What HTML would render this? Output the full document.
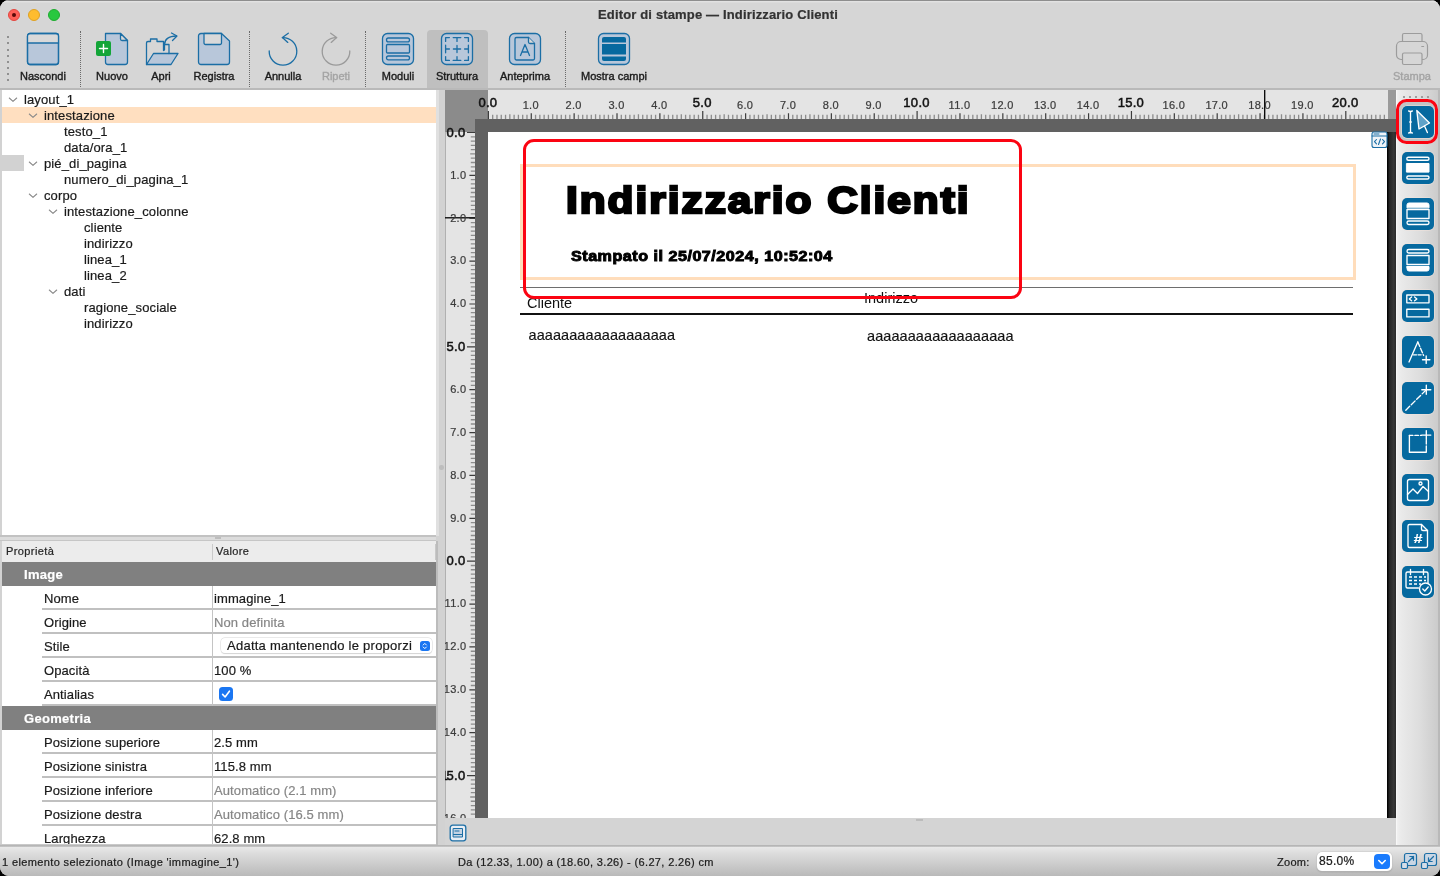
<!DOCTYPE html><html lang="it"><head><meta charset="utf-8"><title>Editor di stampe — Indirizzario Clienti</title><style>
*{box-sizing:border-box;margin:0;padding:0}
html,body{width:1440px;height:876px;overflow:hidden;background:#000;}
body{font-family:"Liberation Sans", "DejaVu Sans", sans-serif;font-size:13px;color:#1e1e1e;position:relative;}
.abs{position:absolute}
#win{will-change:transform;position:absolute;left:0;top:0;width:1440px;height:876px;background:#d6d6d6;border-radius:9px 9px 9px 9px;overflow:hidden;}
.t{position:absolute;white-space:nowrap;line-height:1;-webkit-text-stroke:.22px currentColor;}
.lbl{position:absolute;white-space:nowrap;font-size:11px;line-height:12px;text-align:center;color:#1c1c1c;top:70px;width:80px;margin-left:-40px;letter-spacing:0;-webkit-text-stroke:.38px currentColor;}
.sep{position:absolute;top:31px;width:0;height:56px;border-left:1px dotted #6a6a6a;}
.tree{position:absolute;white-space:nowrap;font-size:13px;line-height:16px;height:16px;color:#1a1a1a;letter-spacing:.12px;-webkit-text-stroke:.2px currentColor;}
.pr{position:absolute;white-space:nowrap;font-size:13px;line-height:16px;color:#1a1a1a;letter-spacing:.1px;-webkit-text-stroke:.2px currentColor;}
.hl{position:absolute;height:1.800px;background:#c0c0c0;}
</style></head><body><div id="win">
<div class="abs" style="left:0;top:0;width:1440px;height:90px;background:#d6d6d6;"></div>
<div class="abs" style="left:0;top:0;width:1440px;height:3px;background:linear-gradient(180deg,#8e8e8e 0,#8e8e8e 0.900px,#e3e3e3 1.300px,#dedede 2.200px,#d6d6d6 3px);"></div>
<div class="abs" style="left:0;top:88px;width:1440px;height:1.600px;background:#b9b9b9;"></div>
<div class="abs" style="left:8px;top:9px;width:12px;height:12px;border-radius:50%;background:#ff5f57;border:0.5px solid #e2463f;"></div>
<div class="abs" style="left:28px;top:9px;width:12px;height:12px;border-radius:50%;background:#febc2e;border:0.5px solid #dea123;"></div>
<div class="abs" style="left:48px;top:9px;width:12px;height:12px;border-radius:50%;background:#28c840;border:0.5px solid #1eab2f;"></div>
<div class="abs" style="left:12px;top:13px;width:4px;height:4px;border-radius:50%;background:#5a0a08;"></div>
<div class="t" style="left:0;width:1436px;text-align:center;top:8px;font-size:13px;font-weight:bold;color:#333;letter-spacing:.15px">Editor di stampe — Indirizzario Clienti</div>
<div class="abs" style="left:7px;top:36px;width:2px;height:2px;background:#909090;"></div>
<div class="abs" style="left:7px;top:42px;width:2px;height:2px;background:#909090;"></div>
<div class="abs" style="left:7px;top:48.5px;width:2px;height:2px;background:#909090;"></div>
<div class="abs" style="left:7px;top:54.5px;width:2px;height:2px;background:#909090;"></div>
<div class="abs" style="left:7px;top:61px;width:2px;height:2px;background:#909090;"></div>
<div class="abs" style="left:7px;top:67px;width:2px;height:2px;background:#909090;"></div>
<div class="abs" style="left:7px;top:73px;width:2px;height:2px;background:#909090;"></div>
<div class="abs" style="left:7px;top:79px;width:2px;height:2px;background:#909090;"></div>
<div class="sep" style="left:80px"></div>
<div class="sep" style="left:249px"></div>
<div class="sep" style="left:365px"></div>
<div class="sep" style="left:565px"></div>
<div class="abs" style="left:427px;top:30px;width:61px;height:58px;background:#bfbfbf;border-radius:4px 4px 0 0;"></div>
<svg class="abs" style="left:26px;top:32px;" width="34" height="34" viewBox="0 0 34 34" fill="none" stroke-linecap="round" stroke-linejoin="round"><rect x="1.5" y="1.5" width="31" height="31" rx="2.5" fill="#b8c7da" stroke="#1b6ea5" stroke-width="1.3"/><path d="M2 2.5h30v8.5h-30z" fill="#d9d9d9" stroke="none"/><rect x="1.5" y="1.5" width="31" height="31" rx="2.5" stroke="#1b6ea5" stroke-width="1.3"/><path d="M1.5 11h31" stroke="#1b6ea5" stroke-width="1.3"/></svg>
<svg class="abs" style="left:95px;top:32px;" width="34" height="34" viewBox="0 0 34 34" fill="none" stroke-linecap="round" stroke-linejoin="round"><path d="M10.5 1.5h15l7 7v21.5a2.5 2.5 0 0 1-2.500 2.500h-17a2.500 2.500 0 0 1-2.500-2.500z" fill="#b8c7da" stroke="#1b6ea5" stroke-width="1.3"/><path d="M25.500 1.500v5.500a1.500 1.500 0 0 0 1.500 1.500h5.500z" fill="#d9d9d9" stroke="#1b6ea5" stroke-width="1.3"/><rect x="1" y="9" width="15" height="15" rx="2" fill="#13a538"/><path d="M8.500 12.500v8M4.500 16.500h8" stroke="#fff" stroke-width="1.400"/></svg>
<svg class="abs" style="left:144px;top:32px;" width="36" height="34" viewBox="0 0 36 34" fill="none" stroke-linecap="round" stroke-linejoin="round"><path d="M2.500 32.500v-21.500a1.500 1.500 0 0 1 1.500-1.500h2.500v-2.500h6.500v2.500h6.500v9" stroke="#1b6ea5" stroke-width="1.3"/><path d="M2.500 32.500l7-11h24.500l-7 11z" fill="#b8c7da" stroke="#1b6ea5" stroke-width="1.3"/><path d="M20.500 18v-5.500c0-5 4-8.500 12-8.500" stroke="#1b6ea5" stroke-width="1.3"/><path d="M27.500 1l5.500 3-4.500 4.500" stroke="#1b6ea5" stroke-width="1.3"/><path d="M20.500 12.500h4.500v9" stroke="#1b6ea5" stroke-width="1.3"/></svg>
<svg class="abs" style="left:197px;top:32px;" width="34" height="34" viewBox="0 0 34 34" fill="none" stroke-linecap="round" stroke-linejoin="round"><path d="M4 1.500h20.500l8 7.500v21a2.500 2.500 0 0 1-2.500 2.500h-26a2.500 2.500 0 0 1-2.500-2.500v-26a2.500 2.500 0 0 1 2.500-2.500z" fill="#b8c7da" stroke="#1b6ea5" stroke-width="1.3"/><path d="M7 1.500h17.500v9.500a1.500 1.500 0 0 1-1.500 1.500h-14.500a1.500 1.500 0 0 1-1.500-1.500z" fill="#d9d9d9" stroke="#1b6ea5" stroke-width="1.3"/></svg>
<svg class="abs" style="left:266px;top:30px;" width="36" height="38" viewBox="0 0 36 38" fill="none" stroke-linecap="round" stroke-linejoin="round"><path d="M16.400 7.600A13.800 13.800 0 1 1 3.200 21" stroke="#1b6ea5" stroke-width="1.3"/><path d="M22.300 3.200l-5.900 4.400 5.400 4.800" stroke="#1b6ea5" stroke-width="1.3"/></svg>
<svg class="abs" style="left:318px;top:30px;" width="36" height="38" viewBox="0 0 36 38" fill="none" stroke-linecap="round" stroke-linejoin="round"><path d="M18.600 7.600A13.800 13.800 0 1 0 31.800 21" stroke="#9a9a9a" stroke-width="1.3"/><path d="M12.700 3.200l5.900 4.400-5.400 4.800" stroke="#9a9a9a" stroke-width="1.3"/></svg>
<svg class="abs" style="left:381px;top:32px;" width="34" height="34" viewBox="0 0 34 34" fill="none" stroke-linecap="round" stroke-linejoin="round"><rect x="1.500" y="1.500" width="31" height="31" rx="5" fill="#b8c7da" stroke="#1b6ea5" stroke-width="1.3"/><rect x="5.500" y="6" width="23" height="3.800" rx="1.900" stroke="#1b6ea5" stroke-width="1.3"/><rect x="5.500" y="12.500" width="23" height="8.500" rx="1" stroke="#1b6ea5" stroke-width="1.3"/><rect x="5.500" y="24" width="23" height="3.800" rx="1.900" stroke="#1b6ea5" stroke-width="1.3"/></svg>
<svg class="abs" style="left:440px;top:32px;" width="34" height="34" viewBox="0 0 34 34" fill="none" stroke-linecap="round" stroke-linejoin="round"><rect x="1.500" y="1.500" width="31" height="31" rx="5" fill="#b8c7da" stroke="#1b6ea5" stroke-width="1.3"/><path d="M5.6 9.399999999999999V5.6h3.800 M13.2 5.6h7.600 M17 5.6v3.800 M24.599999999999998 5.6H28.4v3.800 M5.6 13.2v7.600 M5.6 17h3.800 M28.4 13.2v7.600 M28.4 17h-3.800 M13.4 17h7.200 M17 13.4v7.200 M5.6 24.599999999999998V28.4h3.800 M13.2 28.4h7.600 M17 28.4v-3.800 M24.599999999999998 28.4H28.4v-3.800" stroke="#1b6ea5" stroke-width="1.3"/></svg>
<svg class="abs" style="left:508px;top:32px;" width="34" height="34" viewBox="0 0 34 34" fill="none" stroke-linecap="round" stroke-linejoin="round"><rect x="1.500" y="1.500" width="31" height="31" rx="5" fill="#b8c7da" stroke="#1b6ea5" stroke-width="1.3"/><path d="M8.500 5.500h12l6 6v15a1.500 1.500 0 0 1-1.500 1.500h-16.500a1.500 1.500 0 0 1-1.500-1.500v-19.500a1.500 1.500 0 0 1 1.500-1.500z" stroke="#1b6ea5" stroke-width="1.3"/><path d="M20.500 5.500v4.500a1.500 1.500 0 0 0 1.500 1.500h4.500" fill="#d9d9d9" stroke="#1b6ea5" stroke-width="1.3"/><path d="M12.500 23.500l4.500-11 4.500 11M14 20h6" stroke="#1b6ea5" stroke-width="1.3"/></svg>
<svg class="abs" style="left:597px;top:32px;" width="34" height="34" viewBox="0 0 34 34" fill="none" stroke-linecap="round" stroke-linejoin="round"><rect x="1.500" y="1.500" width="31" height="31" rx="5" fill="#b8c7da" stroke="#1b6ea5" stroke-width="1.3"/><path d="M5 10.600v-3.600a2 2 0 0 1 2-2h20a2 2 0 0 1 2 2v3.600z" fill="#06699f"/><rect x="5" y="12" width="24" height="10.500" fill="#06699f"/><path d="M5 24.400v2.600a2 2 0 0 0 2 2h20a2 2 0 0 0 2-2v-2.600z" fill="#06699f"/></svg>
<svg class="abs" style="left:1395px;top:32px;" width="34" height="34" viewBox="0 0 34 34" fill="none" stroke-linecap="round" stroke-linejoin="round"><path d="M7.500 9.500v-6.500a1.500 1.500 0 0 1 1.500-1.500h16.500a1.500 1.500 0 0 1 1.500 1.500v6.500" stroke="#9c9c9c" stroke-width="1.2"/><rect x="1.500" y="9.500" width="31" height="18" rx="4.500" stroke="#9c9c9c" stroke-width="1.2"/><rect x="7.500" y="21" width="19.500" height="11.500" rx="1.500" fill="#d6d6d6" stroke="#9c9c9c" stroke-width="1.2"/><path d="M26.800 14.500h1.800" stroke="#9c9c9c" stroke-width="1.2"/></svg>
<div class="lbl" style="left:43px;">Nascondi</div>
<div class="lbl" style="left:112px;">Nuovo</div>
<div class="lbl" style="left:161px;">Apri</div>
<div class="lbl" style="left:214px;">Registra</div>
<div class="lbl" style="left:283px;">Annulla</div>
<div class="lbl" style="left:336px;color:#a4a4a4;">Ripeti</div>
<div class="lbl" style="left:398px;">Moduli</div>
<div class="lbl" style="left:457px;">Struttura</div>
<div class="lbl" style="left:525px;">Anteprima</div>
<div class="lbl" style="left:614px;">Mostra campi</div>
<div class="lbl" style="left:1412px;color:#a4a4a4;">Stampa</div>
<div class="abs" style="left:0;top:89.600px;width:445px;height:757px;background:#d2d2d2;"></div>
<div class="abs" style="left:436px;top:89.600px;width:2.500px;height:446px;background:#e0e0e0;"></div>
<div class="abs" style="left:436px;top:541px;width:1.600px;height:305px;background:#bcbcbc;"></div>
<div class="abs" style="left:2px;top:89.600px;width:434.400px;height:445.400px;background:#fff;"></div>
<div class="abs" style="left:2px;top:107px;width:434px;height:16px;background:#ffdfc0;"></div>
<div class="abs" style="left:2px;top:155px;width:22px;height:16px;background:#d2d2d2;"></div>
<div class="tree" style="left:24px;top:92px">layout_1</div>
<svg class="abs" style="left:7.5px;top:96px" width="10" height="8" viewBox="0 0 10 8" fill="none"><path d="M1.300 2l3.700 3.400 3.700-3.400" stroke="#8a8a8a" stroke-width="1.100" stroke-linecap="round" stroke-linejoin="round"/></svg>
<div class="tree" style="left:44px;top:108px">intestazione</div>
<svg class="abs" style="left:27.5px;top:112px" width="10" height="8" viewBox="0 0 10 8" fill="none"><path d="M1.300 2l3.700 3.400 3.700-3.400" stroke="#8a8a8a" stroke-width="1.100" stroke-linecap="round" stroke-linejoin="round"/></svg>
<div class="tree" style="left:64px;top:124px">testo_1</div>
<div class="tree" style="left:64px;top:140px">data/ora_1</div>
<div class="tree" style="left:44px;top:156px">pié_di_pagina</div>
<svg class="abs" style="left:27.5px;top:160px" width="10" height="8" viewBox="0 0 10 8" fill="none"><path d="M1.300 2l3.700 3.400 3.700-3.400" stroke="#8a8a8a" stroke-width="1.100" stroke-linecap="round" stroke-linejoin="round"/></svg>
<div class="tree" style="left:64px;top:172px">numero_di_pagina_1</div>
<div class="tree" style="left:44px;top:188px">corpo</div>
<svg class="abs" style="left:27.5px;top:192px" width="10" height="8" viewBox="0 0 10 8" fill="none"><path d="M1.300 2l3.700 3.400 3.700-3.400" stroke="#8a8a8a" stroke-width="1.100" stroke-linecap="round" stroke-linejoin="round"/></svg>
<div class="tree" style="left:64px;top:204px">intestazione_colonne</div>
<svg class="abs" style="left:47.5px;top:208px" width="10" height="8" viewBox="0 0 10 8" fill="none"><path d="M1.300 2l3.700 3.400 3.700-3.400" stroke="#8a8a8a" stroke-width="1.100" stroke-linecap="round" stroke-linejoin="round"/></svg>
<div class="tree" style="left:84px;top:220px">cliente</div>
<div class="tree" style="left:84px;top:236px">indirizzo</div>
<div class="tree" style="left:84px;top:252px">linea_1</div>
<div class="tree" style="left:84px;top:268px">linea_2</div>
<div class="tree" style="left:64px;top:284px">dati</div>
<svg class="abs" style="left:47.5px;top:288px" width="10" height="8" viewBox="0 0 10 8" fill="none"><path d="M1.300 2l3.700 3.400 3.700-3.400" stroke="#8a8a8a" stroke-width="1.100" stroke-linecap="round" stroke-linejoin="round"/></svg>
<div class="tree" style="left:84px;top:300px">ragione_sociale</div>
<div class="tree" style="left:84px;top:316px">indirizzo</div>
<div class="abs" style="left:0;top:535px;width:436.400px;height:6px;background:#dcdcdc;"></div>
<div class="abs" style="left:0;top:535px;width:436.400px;height:1.500px;background:#c2c2c2;"></div>
<div class="abs" style="left:0;top:539.500px;width:436.400px;height:1.500px;background:#c6c6c6;"></div>
<div class="abs" style="left:215px;top:537px;width:6px;height:2px;background:#bdbdbd;"></div>
<div class="abs" style="left:2px;top:541px;width:434px;height:305px;background:#fff;"></div>
<div class="abs" style="left:2px;top:541px;width:434px;height:21px;background:#ececec;"></div>
<div class="abs" style="left:211.600px;top:544px;width:1.200px;height:16px;background:#cacaca;"></div>
<div class="abs" style="left:434.500px;top:544px;width:1.500px;height:16px;background:#c8c8c8;"></div>
<div class="t" style="left:6px;top:545px;font-size:11px;line-height:12px;color:#262626;letter-spacing:.4px">Proprietà</div>
<div class="t" style="left:216px;top:545px;font-size:11px;line-height:12px;color:#262626;letter-spacing:.4px">Valore</div>
<div class="abs" style="left:2px;top:562px;width:434px;height:24px;background:#808080;"></div>
<div class="pr" style="left:24px;top:567px;color:#fff;font-weight:bold;letter-spacing:.3px">Image</div>
<div class="pr" style="left:44px;top:591px">Nome</div>
<div class="hl" style="left:42px;top:607.8px;width:394px"></div>
<div class="pr" style="left:214px;top:591px;">immagine_1</div>
<div class="pr" style="left:44px;top:615px">Origine</div>
<div class="hl" style="left:42px;top:631.8px;width:394px"></div>
<div class="pr" style="left:214px;top:615px;color:#868686;">Non definita</div>
<div class="pr" style="left:44px;top:639px">Stile</div>
<div class="hl" style="left:42px;top:655.8px;width:394px"></div>
<div class="abs" style="left:221px;top:638px;width:211px;height:15px;background:#fff;border-radius:4px;box-shadow:0 0 0 0.500px #d8d8d8,0 0.500px 1px rgba(0,0,0,.18);"></div>
<div class="pr" style="left:227px;top:638px;letter-spacing:.25px">Adatta mantenendo le proporzi</div>
<div class="abs" style="left:420px;top:641px;width:9.500px;height:9.500px;background:#1a76f2;border-radius:2.500px;"></div>
<svg class="abs" style="left:420px;top:641px" width="10" height="10" viewBox="0 0 10 10" fill="none"><path d="M3.200 4l1.600-1.600 1.600 1.600M3.200 6l1.600 1.600 1.600-1.600" stroke="#fff" stroke-width="1" stroke-linecap="round" stroke-linejoin="round"/></svg>
<div class="pr" style="left:44px;top:663px">Opacità</div>
<div class="hl" style="left:42px;top:679.8px;width:394px"></div>
<div class="pr" style="left:214px;top:663px;">100 %</div>
<div class="pr" style="left:44px;top:687px">Antialias</div>
<div class="hl" style="left:42px;top:703.8px;width:394px"></div>
<div class="abs" style="left:219px;top:687px;width:14px;height:14px;background:#1a76f2;border-radius:3.500px;"></div>
<svg class="abs" style="left:219px;top:687px" width="14" height="14" viewBox="0 0 14 14" fill="none"><path d="M3.600 7.400l2.500 2.600 4.300-5.800" stroke="#fff" stroke-width="1.600" stroke-linecap="round" stroke-linejoin="round"/></svg>
<div class="abs" style="left:2px;top:706px;width:434px;height:24px;background:#808080;"></div>
<div class="pr" style="left:24px;top:711px;color:#fff;font-weight:bold;letter-spacing:.3px">Geometria</div>
<div class="pr" style="left:44px;top:735px">Posizione superiore</div>
<div class="hl" style="left:42px;top:751.8px;width:394px"></div>
<div class="pr" style="left:214px;top:735px;">2.5 mm</div>
<div class="pr" style="left:44px;top:759px">Posizione sinistra</div>
<div class="hl" style="left:42px;top:775.8px;width:394px"></div>
<div class="pr" style="left:214px;top:759px;">115.8 mm</div>
<div class="pr" style="left:44px;top:783px">Posizione inferiore</div>
<div class="hl" style="left:42px;top:799.8px;width:394px"></div>
<div class="pr" style="left:214px;top:783px;color:#868686;">Automatico (2.1 mm)</div>
<div class="pr" style="left:44px;top:807px">Posizione destra</div>
<div class="hl" style="left:42px;top:823.8px;width:394px"></div>
<div class="pr" style="left:214px;top:807px;color:#868686;">Automatico (16.5 mm)</div>
<div class="pr" style="left:44px;top:831px">Larghezza</div>
<div class="hl" style="left:42px;top:847.8px;width:394px"></div>
<div class="pr" style="left:214px;top:831px;">62.8 mm</div>
<div class="abs" style="left:211.600px;top:586px;width:1.200px;height:260px;background:#c4c4c4;"></div>
<div class="abs" style="left:211px;top:706px;width:2.500px;height:24px;background:#808080;"></div>
<div class="abs" style="left:445px;top:90px;width:951px;height:728px;background:#616161;"></div>
<div class="abs" style="left:445px;top:90px;width:43px;height:29px;background:#8b8b8b;"></div>
<div class="abs" style="left:445px;top:90px;width:30px;height:42px;background:#8b8b8b;"></div>
<div class="abs" style="left:488px;top:90px;width:900px;height:29px;background:#e4e4e4;"></div>
<div class="abs" style="left:1388px;top:90px;width:8px;height:29px;background:#9a9a9a;"></div>
<div class="abs" style="left:445px;top:132px;width:30px;height:686px;background:#e4e4e4;border-left:1px solid #b0b0b0;"></div>
<div class="abs" style="left:488px;top:132px;width:900px;height:686px;background:#fff;"></div>
<div class="abs" style="left:1387px;top:132px;width:9px;height:686px;background:linear-gradient(90deg,#000 0,#050505 8%,#242424 25%,#383838 75%,#2a2a2a 100%);"></div>
<svg class="abs" style="left:445px;top:90px" width="951" height="30" viewBox="0 0 951 30"><path d="M47.69 24.80v4.20 M51.97 24.80v4.20 M56.26 24.80v4.20 M60.55 24.80v4.20 M64.83 24.20v4.80 M69.12 24.80v4.20 M73.41 24.80v4.20 M77.70 24.80v4.20 M81.98 24.80v4.20 M90.56 24.80v4.20 M94.84 24.80v4.20 M99.13 24.80v4.20 M103.42 24.80v4.20 M107.70 24.20v4.80 M111.99 24.80v4.20 M116.28 24.80v4.20 M120.57 24.80v4.20 M124.85 24.80v4.20 M133.43 24.80v4.20 M137.71 24.80v4.20 M142.00 24.80v4.20 M146.29 24.80v4.20 M150.57 24.20v4.80 M154.86 24.80v4.20 M159.15 24.80v4.20 M163.44 24.80v4.20 M167.72 24.80v4.20 M176.30 24.80v4.20 M180.58 24.80v4.20 M184.87 24.80v4.20 M189.16 24.80v4.20 M193.44 24.20v4.80 M197.73 24.80v4.20 M202.02 24.80v4.20 M206.31 24.80v4.20 M210.59 24.80v4.20 M219.17 24.80v4.20 M223.45 24.80v4.20 M227.74 24.80v4.20 M232.03 24.80v4.20 M236.31 24.20v4.80 M240.60 24.80v4.20 M244.89 24.80v4.20 M249.18 24.80v4.20 M253.46 24.80v4.20 M262.04 24.80v4.20 M266.32 24.80v4.20 M270.61 24.80v4.20 M274.90 24.80v4.20 M279.18 24.20v4.80 M283.47 24.80v4.20 M287.76 24.80v4.20 M292.05 24.80v4.20 M296.33 24.80v4.20 M304.91 24.80v4.20 M309.19 24.80v4.20 M313.48 24.80v4.20 M317.77 24.80v4.20 M322.05 24.20v4.80 M326.34 24.80v4.20 M330.63 24.80v4.20 M334.92 24.80v4.20 M339.20 24.80v4.20 M347.78 24.80v4.20 M352.06 24.80v4.20 M356.35 24.80v4.20 M360.64 24.80v4.20 M364.92 24.20v4.80 M369.21 24.80v4.20 M373.50 24.80v4.20 M377.79 24.80v4.20 M382.07 24.80v4.20 M390.65 24.80v4.20 M394.93 24.80v4.20 M399.22 24.80v4.20 M403.51 24.80v4.20 M407.79 24.20v4.80 M412.08 24.80v4.20 M416.37 24.80v4.20 M420.66 24.80v4.20 M424.94 24.80v4.20 M433.52 24.80v4.20 M437.80 24.80v4.20 M442.09 24.80v4.20 M446.38 24.80v4.20 M450.66 24.20v4.80 M454.95 24.80v4.20 M459.24 24.80v4.20 M463.53 24.80v4.20 M467.81 24.80v4.20 M476.39 24.80v4.20 M480.67 24.80v4.20 M484.96 24.80v4.20 M489.25 24.80v4.20 M493.53 24.20v4.80 M497.82 24.80v4.20 M502.11 24.80v4.20 M506.40 24.80v4.20 M510.68 24.80v4.20 M519.26 24.80v4.20 M523.54 24.80v4.20 M527.83 24.80v4.20 M532.12 24.80v4.20 M536.40 24.20v4.80 M540.69 24.80v4.20 M544.98 24.80v4.20 M549.27 24.80v4.20 M553.55 24.80v4.20 M562.13 24.80v4.20 M566.41 24.80v4.20 M570.70 24.80v4.20 M574.99 24.80v4.20 M579.27 24.20v4.80 M583.56 24.80v4.20 M587.85 24.80v4.20 M592.14 24.80v4.20 M596.42 24.80v4.20 M605.00 24.80v4.20 M609.28 24.80v4.20 M613.57 24.80v4.20 M617.86 24.80v4.20 M622.14 24.20v4.80 M626.43 24.80v4.20 M630.72 24.80v4.20 M635.01 24.80v4.20 M639.29 24.80v4.20 M647.87 24.80v4.20 M652.15 24.80v4.20 M656.44 24.80v4.20 M660.73 24.80v4.20 M665.01 24.20v4.80 M669.30 24.80v4.20 M673.59 24.80v4.20 M677.88 24.80v4.20 M682.16 24.80v4.20 M690.74 24.80v4.20 M695.02 24.80v4.20 M699.31 24.80v4.20 M703.60 24.80v4.20 M707.88 24.20v4.80 M712.17 24.80v4.20 M716.46 24.80v4.20 M720.75 24.80v4.20 M725.03 24.80v4.20 M733.61 24.80v4.20 M737.89 24.80v4.20 M742.18 24.80v4.20 M746.47 24.80v4.20 M750.75 24.20v4.80 M755.04 24.80v4.20 M759.33 24.80v4.20 M763.62 24.80v4.20 M767.90 24.80v4.20 M776.48 24.80v4.20 M780.76 24.80v4.20 M785.05 24.80v4.20 M789.34 24.80v4.20 M793.62 24.20v4.80 M797.91 24.80v4.20 M802.20 24.80v4.20 M806.49 24.80v4.20 M810.77 24.80v4.20 M819.35 24.80v4.20 M823.63 24.80v4.20 M827.92 24.80v4.20 M832.21 24.80v4.20 M836.49 24.20v4.80 M840.78 24.80v4.20 M845.07 24.80v4.20 M849.36 24.80v4.20 M853.64 24.80v4.20 M862.22 24.80v4.20 M866.50 24.80v4.20 M870.79 24.80v4.20 M875.08 24.80v4.20 M879.36 24.20v4.80 M883.65 24.80v4.20 M887.94 24.80v4.20 M892.23 24.80v4.20 M896.51 24.80v4.20 M905.09 24.80v4.20 M909.37 24.80v4.20 M913.66 24.80v4.20 M917.95 24.80v4.20 M922.24 24.20v4.80 M926.52 24.80v4.20 M930.81 24.80v4.20 M935.10 24.80v4.20 M939.38 24.80v4.20" stroke="#8c8c8c" stroke-width="1.300" fill="none"/><path d="M43.40 21.00v8.00 M86.27 23.20v5.80 M129.14 23.20v5.80 M172.01 23.20v5.80 M214.88 23.20v5.80 M257.75 21.00v8.00 M300.62 23.20v5.80 M343.49 23.20v5.80 M386.36 23.20v5.80 M429.23 23.20v5.80 M472.10 21.00v8.00 M514.97 23.20v5.80 M557.84 23.20v5.80 M600.71 23.20v5.80 M643.58 23.20v5.80 M686.45 21.00v8.00 M729.32 23.20v5.80 M772.19 23.20v5.80 M815.06 23.20v5.80 M857.93 23.20v5.80 M900.80 21.00v8.00" stroke="#3c3c3c" stroke-width="1.200" fill="none"/><path d="M819.70 0v29" stroke="#000" stroke-width="1.300"/></svg>
<svg class="abs" style="left:445px;top:90px" width="31" height="728" viewBox="0 0 31 728"><path d="M25.80 46.79h4.20 M25.80 51.07h4.20 M25.80 55.36h4.20 M25.80 59.65h4.20 M25.20 63.94h4.80 M25.80 68.22h4.20 M25.80 72.51h4.20 M25.80 76.80h4.20 M25.80 81.08h4.20 M25.80 89.66h4.20 M25.80 93.94h4.20 M25.80 98.23h4.20 M25.80 102.52h4.20 M25.20 106.81h4.80 M25.80 111.09h4.20 M25.80 115.38h4.20 M25.80 119.67h4.20 M25.80 123.95h4.20 M25.80 132.53h4.20 M25.80 136.81h4.20 M25.80 141.10h4.20 M25.80 145.39h4.20 M25.20 149.68h4.80 M25.80 153.96h4.20 M25.80 158.25h4.20 M25.80 162.54h4.20 M25.80 166.82h4.20 M25.80 175.40h4.20 M25.80 179.68h4.20 M25.80 183.97h4.20 M25.80 188.26h4.20 M25.20 192.54h4.80 M25.80 196.83h4.20 M25.80 201.12h4.20 M25.80 205.41h4.20 M25.80 209.69h4.20 M25.80 218.27h4.20 M25.80 222.55h4.20 M25.80 226.84h4.20 M25.80 231.13h4.20 M25.20 235.41h4.80 M25.80 239.70h4.20 M25.80 243.99h4.20 M25.80 248.28h4.20 M25.80 252.56h4.20 M25.80 261.14h4.20 M25.80 265.42h4.20 M25.80 269.71h4.20 M25.80 274.00h4.20 M25.20 278.28h4.80 M25.80 282.57h4.20 M25.80 286.86h4.20 M25.80 291.15h4.20 M25.80 295.43h4.20 M25.80 304.01h4.20 M25.80 308.29h4.20 M25.80 312.58h4.20 M25.80 316.87h4.20 M25.20 321.15h4.80 M25.80 325.44h4.20 M25.80 329.73h4.20 M25.80 334.02h4.20 M25.80 338.30h4.20 M25.80 346.88h4.20 M25.80 351.16h4.20 M25.80 355.45h4.20 M25.80 359.74h4.20 M25.20 364.02h4.80 M25.80 368.31h4.20 M25.80 372.60h4.20 M25.80 376.89h4.20 M25.80 381.17h4.20 M25.80 389.75h4.20 M25.80 394.03h4.20 M25.80 398.32h4.20 M25.80 402.61h4.20 M25.20 406.89h4.80 M25.80 411.18h4.20 M25.80 415.47h4.20 M25.80 419.76h4.20 M25.80 424.04h4.20 M25.80 432.62h4.20 M25.80 436.90h4.20 M25.80 441.19h4.20 M25.80 445.48h4.20 M25.20 449.76h4.80 M25.80 454.05h4.20 M25.80 458.34h4.20 M25.80 462.63h4.20 M25.80 466.91h4.20 M25.80 475.49h4.20 M25.80 479.77h4.20 M25.80 484.06h4.20 M25.80 488.35h4.20 M25.20 492.63h4.80 M25.80 496.92h4.20 M25.80 501.21h4.20 M25.80 505.50h4.20 M25.80 509.78h4.20 M25.80 518.36h4.20 M25.80 522.64h4.20 M25.80 526.93h4.20 M25.80 531.22h4.20 M25.20 535.50h4.80 M25.80 539.79h4.20 M25.80 544.08h4.20 M25.80 548.37h4.20 M25.80 552.65h4.20 M25.80 561.23h4.20 M25.80 565.51h4.20 M25.80 569.80h4.20 M25.80 574.09h4.20 M25.20 578.38h4.80 M25.80 582.66h4.20 M25.80 586.95h4.20 M25.80 591.24h4.20 M25.80 595.52h4.20 M25.80 604.10h4.20 M25.80 608.38h4.20 M25.80 612.67h4.20 M25.80 616.96h4.20 M25.20 621.25h4.80 M25.80 625.53h4.20 M25.80 629.82h4.20 M25.80 634.11h4.20 M25.80 638.39h4.20 M25.80 646.97h4.20 M25.80 651.25h4.20 M25.80 655.54h4.20 M25.80 659.83h4.20 M25.20 664.12h4.80 M25.80 668.40h4.20 M25.80 672.69h4.20 M25.80 676.98h4.20 M25.80 681.26h4.20 M25.80 689.84h4.20 M25.80 694.12h4.20 M25.80 698.41h4.20 M25.80 702.70h4.20 M25.20 706.98h4.80 M25.80 711.27h4.20 M25.80 715.56h4.20 M25.80 719.85h4.20 M25.80 724.13h4.20" stroke="#8c8c8c" stroke-width="1.300" fill="none"/><path d="M22.00 42.50h8.00 M24.40 85.37h5.60 M24.40 128.24h5.60 M24.40 171.11h5.60 M24.40 213.98h5.60 M22.00 256.85h8.00 M24.40 299.72h5.60 M24.40 342.59h5.60 M24.40 385.46h5.60 M24.40 428.33h5.60 M22.00 471.20h8.00 M24.40 514.07h5.60 M24.40 556.94h5.60 M24.40 599.81h5.60 M24.40 642.68h5.60 M22.00 685.55h8.00" stroke="#3c3c3c" stroke-width="1.200" fill="none"/><path d="M0 127.80h30" stroke="#000" stroke-width="1.300"/></svg>
<div class="t" style="left:457.9px;width:60px;text-align:center;top:96px;font-size:13px;color:#111;letter-spacing:.3px;-webkit-text-stroke:.5px currentColor;">0.0</div>
<div class="t" style="left:500.8px;width:60px;text-align:center;top:99.5px;font-size:11px;color:#3c3c3c;letter-spacing:.3px;">1.0</div>
<div class="t" style="left:543.6px;width:60px;text-align:center;top:99.5px;font-size:11px;color:#3c3c3c;letter-spacing:.3px;">2.0</div>
<div class="t" style="left:586.5px;width:60px;text-align:center;top:99.5px;font-size:11px;color:#3c3c3c;letter-spacing:.3px;">3.0</div>
<div class="t" style="left:629.4px;width:60px;text-align:center;top:99.5px;font-size:11px;color:#3c3c3c;letter-spacing:.3px;">4.0</div>
<div class="t" style="left:672.2px;width:60px;text-align:center;top:96px;font-size:13px;color:#111;letter-spacing:.3px;-webkit-text-stroke:.5px currentColor;">5.0</div>
<div class="t" style="left:715.1px;width:60px;text-align:center;top:99.5px;font-size:11px;color:#3c3c3c;letter-spacing:.3px;">6.0</div>
<div class="t" style="left:758.0px;width:60px;text-align:center;top:99.5px;font-size:11px;color:#3c3c3c;letter-spacing:.3px;">7.0</div>
<div class="t" style="left:800.9px;width:60px;text-align:center;top:99.5px;font-size:11px;color:#3c3c3c;letter-spacing:.3px;">8.0</div>
<div class="t" style="left:843.7px;width:60px;text-align:center;top:99.5px;font-size:11px;color:#3c3c3c;letter-spacing:.3px;">9.0</div>
<div class="t" style="left:886.6px;width:60px;text-align:center;top:96px;font-size:13px;color:#111;letter-spacing:.3px;-webkit-text-stroke:.5px currentColor;">10.0</div>
<div class="t" style="left:929.5px;width:60px;text-align:center;top:99.5px;font-size:11px;color:#3c3c3c;letter-spacing:.3px;">11.0</div>
<div class="t" style="left:972.3px;width:60px;text-align:center;top:99.5px;font-size:11px;color:#3c3c3c;letter-spacing:.3px;">12.0</div>
<div class="t" style="left:1015.2px;width:60px;text-align:center;top:99.5px;font-size:11px;color:#3c3c3c;letter-spacing:.3px;">13.0</div>
<div class="t" style="left:1058.1px;width:60px;text-align:center;top:99.5px;font-size:11px;color:#3c3c3c;letter-spacing:.3px;">14.0</div>
<div class="t" style="left:1100.9px;width:60px;text-align:center;top:96px;font-size:13px;color:#111;letter-spacing:.3px;-webkit-text-stroke:.5px currentColor;">15.0</div>
<div class="t" style="left:1143.8px;width:60px;text-align:center;top:99.5px;font-size:11px;color:#3c3c3c;letter-spacing:.3px;">16.0</div>
<div class="t" style="left:1186.7px;width:60px;text-align:center;top:99.5px;font-size:11px;color:#3c3c3c;letter-spacing:.3px;">17.0</div>
<div class="t" style="left:1229.6px;width:60px;text-align:center;top:99.5px;font-size:11px;color:#3c3c3c;letter-spacing:.3px;">18.0</div>
<div class="t" style="left:1272.4px;width:60px;text-align:center;top:99.5px;font-size:11px;color:#3c3c3c;letter-spacing:.3px;">19.0</div>
<div class="t" style="left:1315.3px;width:60px;text-align:center;top:96px;font-size:13px;color:#111;letter-spacing:.3px;-webkit-text-stroke:.5px currentColor;">20.0</div>
<div class="abs" style="left:444.500px;top:120px;width:31.500px;height:698px;overflow:hidden;">
<div class="t" style="right:10.5px;top:5.7px;font-size:13px;color:#111;letter-spacing:.3px;-webkit-text-stroke:.5px currentColor;">0.0</div>
<div class="t" style="right:9.6px;top:49.7px;font-size:11px;color:#3c3c3c;letter-spacing:.3px;">1.0</div>
<div class="t" style="right:9.6px;top:92.5px;font-size:11px;color:#3c3c3c;letter-spacing:.3px;">2.0</div>
<div class="t" style="right:9.6px;top:135.4px;font-size:11px;color:#3c3c3c;letter-spacing:.3px;">3.0</div>
<div class="t" style="right:9.6px;top:178.3px;font-size:11px;color:#3c3c3c;letter-spacing:.3px;">4.0</div>
<div class="t" style="right:10.5px;top:220.1px;font-size:13px;color:#111;letter-spacing:.3px;-webkit-text-stroke:.5px currentColor;">5.0</div>
<div class="t" style="right:9.6px;top:264.0px;font-size:11px;color:#3c3c3c;letter-spacing:.3px;">6.0</div>
<div class="t" style="right:9.6px;top:306.9px;font-size:11px;color:#3c3c3c;letter-spacing:.3px;">7.0</div>
<div class="t" style="right:9.6px;top:349.7px;font-size:11px;color:#3c3c3c;letter-spacing:.3px;">8.0</div>
<div class="t" style="right:9.6px;top:392.6px;font-size:11px;color:#3c3c3c;letter-spacing:.3px;">9.0</div>
<div class="t" style="right:10.5px;top:434.4px;font-size:13px;color:#111;letter-spacing:.3px;-webkit-text-stroke:.5px currentColor;"><span style="opacity:0">1</span>0.0</div>
<div class="t" style="right:9.6px;top:478.3px;font-size:11px;color:#3c3c3c;letter-spacing:.3px;">11.0</div>
<div class="t" style="right:9.6px;top:521.2px;font-size:11px;color:#3c3c3c;letter-spacing:.3px;">12.0</div>
<div class="t" style="right:9.6px;top:564.1px;font-size:11px;color:#3c3c3c;letter-spacing:.3px;">13.0</div>
<div class="t" style="right:9.6px;top:607.0px;font-size:11px;color:#3c3c3c;letter-spacing:.3px;">14.0</div>
<div class="t" style="right:10.5px;top:648.8px;font-size:13px;color:#111;letter-spacing:.3px;-webkit-text-stroke:.5px currentColor;"><span style="letter-spacing:-1.500px">1</span>5.0</div>
<div class="t" style="right:9.6px;top:692.7px;font-size:11px;color:#3c3c3c;letter-spacing:.3px;">16.0</div>
</div>
<div class="abs" style="left:520px;top:164px;width:835.500px;height:116px;border:3px solid #ffddbb;"></div>
<div class="abs" style="left:520px;top:287px;width:833px;height:1.200px;background:#6e6e6e;"></div>
<div class="abs" style="left:520px;top:313.300px;width:833px;height:2px;background:#111;"></div>
<div class="t" id="ttl" style="left:565.500px;top:178.500px;font-family:'Liberation Sans', sans-serif;font-weight:bold;font-size:36.500px;line-height:44px;color:#000;-webkit-text-stroke:2.400px #000;letter-spacing:1.720px;transform:scaleX(1.16);transform-origin:0 0">Indirizzario Clienti</div>
<div class="t" id="sub" style="left:571px;top:246.800px;font-family:'Liberation Sans', sans-serif;font-weight:bold;font-size:14px;line-height:18px;color:#000;-webkit-text-stroke:.900px #000;letter-spacing:.450px;transform:scaleX(1.15);transform-origin:0 0">Stampato il 25/07/2024, 10:52:04</div>
<div class="t" id="c1" style="-webkit-text-stroke:0;left:527px;top:295px;font-size:14.500px;line-height:16px;color:#111">Cliente</div>
<div class="t" id="c2" style="-webkit-text-stroke:0;left:864px;top:290px;font-size:14.500px;line-height:16px;color:#111">Indirizzo</div>
<div class="t" id="a1" style="-webkit-text-stroke:.15px #111;letter-spacing:.08px;left:528.500px;top:326.500px;font-size:14.500px;line-height:16px;color:#111">aaaaaaaaaaaaaaaaaa</div>
<div class="t" id="a2" style="-webkit-text-stroke:.15px #111;letter-spacing:.08px;left:867px;top:327.500px;font-size:14.500px;line-height:16px;color:#111">aaaaaaaaaaaaaaaaaa</div>
<div class="abs" style="left:523px;top:139px;width:498.500px;height:160px;border:3.600px solid #fb0412;border-radius:11px;"></div>
<svg class="abs" style="left:1371px;top:131px;" width="17" height="18" viewBox="0 0 17 18" fill="none" stroke-linecap="round" stroke-linejoin="round"><rect x="1" y="1" width="15" height="15.500" rx="2" fill="#eef3f8" stroke="#1b6ea5" stroke-width="1.100"/><path d="M1 5h15" stroke="#1b6ea5" stroke-width="1"/><path d="M3 3h5" stroke="#1b6ea5" stroke-width="1"/><path d="M5.500 8.500l-2 2.200 2 2.200M11.500 8.500l2 2.200-2 2.200M9.500 8l-2 5.500" stroke="#1b6ea5" stroke-width="1.100"/></svg>
<div class="abs" style="left:445px;top:818px;width:951px;height:28px;background:#d4d4d4;"></div>
<svg class="abs" style="left:449px;top:824px;" width="18" height="18" viewBox="0 0 18 18" fill="none" stroke-linecap="round" stroke-linejoin="round"><rect x="1.200" y="1.200" width="15.600" height="15.600" rx="2.500" fill="#e9eef4" stroke="#1b6ea5" stroke-width="1.300"/><rect x="4.500" y="4.500" width="9" height="8.500" fill="#c4d3e3" stroke="#1b6ea5" stroke-width="1"/><path d="M6 7h4M4.500 10.500h9" stroke="#1b6ea5" stroke-width="1"/></svg>
<div class="abs" style="left:916px;top:818.500px;width:7px;height:2px;background:#bcbcbc;"></div>
<div class="abs" style="left:439px;top:465px;width:4.500px;height:4.500px;border-radius:50%;background:#bdbdbd;"></div>
<div class="abs" style="left:1396px;top:90px;width:44px;height:756px;background:linear-gradient(90deg,#fbfbfb 0,#f0f0f0 1.500px,#eaeaea 5px,#dddddd 24px,#cccccc 41.500px,#b9b9b9 42.200px,#b9b9b9 44px);"></div>
<div class="abs" style="left:1403px;top:96.300px;width:2.400px;height:2.200px;background:#9e9e9e;"></div>
<div class="abs" style="left:1409px;top:96.300px;width:2.400px;height:2.200px;background:#9e9e9e;"></div>
<div class="abs" style="left:1415px;top:96.300px;width:2.400px;height:2.200px;background:#9e9e9e;"></div>
<div class="abs" style="left:1421px;top:96.300px;width:2.400px;height:2.200px;background:#9e9e9e;"></div>
<div class="abs" style="left:1427px;top:96.300px;width:2.400px;height:2.200px;background:#9e9e9e;"></div>
<div class="abs" style="left:1398px;top:101px;width:39px;height:41px;background:#c4c4c4;border-radius:7px;"></div>
<svg class="abs" style="left:1401px;top:105px" width="34" height="34" viewBox="0 0 34 34" fill="none" stroke-linecap="round" stroke-linejoin="round"><rect x="0.500" y="0.500" width="33" height="33" rx="5.500" fill="#f3e4dc"/><rect x="1" y="1" width="32" height="32" rx="5" fill="#06699f"/><path d="M7.600 6c1.200 0 1.900.500 1.900 1.500c0-1 .700-1.500 1.900-1.500M9.500 7.500v19M7.600 28c1.200 0 1.900-.500 1.900-1.500c0 1 .700 1.500 1.900 1.500M8.700 17h1.600" stroke="#fff" stroke-width="1.350"/><path d="M15.800 5.500L28.500 18L18 24z" fill="#5fa2c8" stroke="#fff" stroke-width="1.350"/><path d="M23.600 21.300l2.800 6.300" stroke="#fff" stroke-width="1.350"/></svg>
<svg class="abs" style="left:1401px;top:151px" width="34" height="34" viewBox="0 0 34 34" fill="none" stroke-linecap="round" stroke-linejoin="round"><rect x="0.500" y="0.500" width="33" height="33" rx="5.500" fill="#f3e4dc"/><rect x="1" y="1" width="32" height="32" rx="5" fill="#06699f"/><rect x="5.800" y="6.200" width="22.200" height="3" rx="1.500" stroke="#fff" stroke-width="1.350"/><rect x="5.800" y="12.500" width="22.200" height="8.600" fill="#fff" stroke="#fff" stroke-width="1"/><rect x="5.800" y="25" width="22.200" height="3" rx="1.500" stroke="#fff" stroke-width="1.350"/></svg>
<svg class="abs" style="left:1401px;top:197px" width="34" height="34" viewBox="0 0 34 34" fill="none" stroke-linecap="round" stroke-linejoin="round"><rect x="0.500" y="0.500" width="33" height="33" rx="5.500" fill="#f3e4dc"/><rect x="1" y="1" width="32" height="32" rx="5" fill="#06699f"/><path d="M6 10.500v-2.500a2 2 0 0 1 2-2h18a2 2 0 0 1 2 2v2.500z" fill="#fff" stroke="#fff" stroke-width="1"/><rect x="6" y="12.500" width="22" height="9" stroke="#fff" stroke-width="1.350"/><rect x="6" y="24" width="22" height="3.500" rx="1.700" stroke="#fff" stroke-width="1.350"/></svg>
<svg class="abs" style="left:1401px;top:243px" width="34" height="34" viewBox="0 0 34 34" fill="none" stroke-linecap="round" stroke-linejoin="round"><rect x="0.500" y="0.500" width="33" height="33" rx="5.500" fill="#f3e4dc"/><rect x="1" y="1" width="32" height="32" rx="5" fill="#06699f"/><rect x="6" y="6.500" width="22" height="3.500" rx="1.700" stroke="#fff" stroke-width="1.350"/><rect x="6" y="12.500" width="22" height="9" stroke="#fff" stroke-width="1.350"/><path d="M6 23.500h22v2.500a2 2 0 0 1-2 2h-18a2 2 0 0 1-2-2z" fill="#fff" stroke="#fff" stroke-width="1"/></svg>
<svg class="abs" style="left:1401px;top:289px" width="34" height="34" viewBox="0 0 34 34" fill="none" stroke-linecap="round" stroke-linejoin="round"><rect x="0.500" y="0.500" width="33" height="33" rx="5.500" fill="#f3e4dc"/><rect x="1" y="1" width="32" height="32" rx="5" fill="#06699f"/><rect x="5.800" y="6" width="22.200" height="7.800" stroke="#fff" stroke-width="1.350"/><rect x="5.800" y="20.200" width="22.200" height="7.700" stroke="#fff" stroke-width="1.350"/><path d="M10.600 8l-2.300 1.900 2.300 1.900M13.600 8l2.300 1.900-2.300 1.900" stroke="#fff" stroke-width="1.300"/></svg>
<svg class="abs" style="left:1401px;top:335px" width="34" height="34" viewBox="0 0 34 34" fill="none" stroke-linecap="round" stroke-linejoin="round"><rect x="0.500" y="0.500" width="33" height="33" rx="5.500" fill="#f3e4dc"/><rect x="1" y="1" width="32" height="32" rx="5" fill="#06699f"/><path d="M8 27l8.800-20" stroke="#fff" stroke-width="1.350"/><path d="M16.800 7l5.800 13.500" stroke="#fff" stroke-width="1.350" stroke-dasharray="5 1.800"/><path d="M12.500 19.800h8" stroke="#fff" stroke-width="1.350" stroke-dasharray="3 1.600"/><path d="M25.200 21v7.400M21.500 24.700h7.400" stroke="#fff" stroke-width="1.350"/></svg>
<svg class="abs" style="left:1401px;top:381px" width="34" height="34" viewBox="0 0 34 34" fill="none" stroke-linecap="round" stroke-linejoin="round"><rect x="0.500" y="0.500" width="33" height="33" rx="5.500" fill="#f3e4dc"/><rect x="1" y="1" width="32" height="32" rx="5" fill="#06699f"/><path d="M4.800 29.200L25.300 8.700" stroke="#fff" stroke-width="1.350" stroke-dasharray="5.500 2.200"/><path d="M25.300 4.200v9M20.800 8.700h9" stroke="#fff" stroke-width="1.350"/></svg>
<svg class="abs" style="left:1401px;top:427px" width="34" height="34" viewBox="0 0 34 34" fill="none" stroke-linecap="round" stroke-linejoin="round"><rect x="0.500" y="0.500" width="33" height="33" rx="5.500" fill="#f3e4dc"/><rect x="1" y="1" width="32" height="32" rx="5" fill="#06699f"/><path d="M8.400 8.400v16.800h16.900v-4" stroke="#fff" stroke-width="1.350"/><path d="M8.400 8.400h12" stroke="#fff" stroke-width="1.350" stroke-dasharray="3.500 2"/><path d="M25.300 13.500v7" stroke="#fff" stroke-width="1.350" stroke-dasharray="3.500 2"/><path d="M25.300 3.600v9M20.800 8.100h9" stroke="#fff" stroke-width="1.350"/></svg>
<svg class="abs" style="left:1401px;top:473px" width="34" height="34" viewBox="0 0 34 34" fill="none" stroke-linecap="round" stroke-linejoin="round"><rect x="0.500" y="0.500" width="33" height="33" rx="5.500" fill="#f3e4dc"/><rect x="1" y="1" width="32" height="32" rx="5" fill="#06699f"/><rect x="6.500" y="6.500" width="21" height="21" rx="2" stroke="#fff" stroke-width="1.350"/><path d="M6.500 21.500l5.500-5.500 4.500 4.500 5.500-7 5.500 5" stroke="#fff" stroke-width="1.350"/><circle cx="19.500" cy="10.500" r="1.500" stroke="#fff" stroke-width="1.350"/></svg>
<svg class="abs" style="left:1401px;top:519px" width="34" height="34" viewBox="0 0 34 34" fill="none" stroke-linecap="round" stroke-linejoin="round"><rect x="0.500" y="0.500" width="33" height="33" rx="5.500" fill="#f3e4dc"/><rect x="1" y="1" width="32" height="32" rx="5" fill="#06699f"/><path d="M8.500 5.500h12l6 6v15.500a1.500 1.500 0 0 1-1.500 1.500h-16.500a1.500 1.500 0 0 1-1.500-1.500v-20a1.500 1.500 0 0 1 1.500-1.500z" stroke="#fff" stroke-width="1.350"/><path d="M20.500 5.500v4.500a1.500 1.500 0 0 0 1.500 1.500h4.500" stroke="#fff" stroke-width="1.350"/></svg>
<div class="t" style="left:1401px;width:34px;text-align:center;top:532px;font-size:13px;font-weight:bold;color:#fff;transform:scaleX(1.2);">#</div>
<svg class="abs" style="left:1401px;top:565px" width="34" height="34" viewBox="0 0 34 34" fill="none" stroke-linecap="round" stroke-linejoin="round"><rect x="0.500" y="0.500" width="33" height="33" rx="5.500" fill="#f3e4dc"/><rect x="1" y="1" width="32" height="32" rx="5" fill="#06699f"/><path d="M5 8.500a1.500 1.500 0 0 1 1.500-1.500h19a1.500 1.500 0 0 1 1.500 1.500v10M5 8.500v13a1.500 1.500 0 0 0 1.500 1.500h11" stroke="#fff" stroke-width="1.350"/><path d="M9.500 4.500v5M22.500 4.500v5" stroke="#fff" stroke-width="1.350"/><path d="M8 12h3M13 12h3M18 12h3M23 12h2M8 15.500h3M13 15.500h3M18 15.500h3M23 15.500h2M8 19h3M13 19h3M18 19h2" stroke="#fff" stroke-width="1.400" stroke-linecap="butt"/><circle cx="24.500" cy="24" r="6" fill="#06699f" stroke="#fff" stroke-width="1.350"/><path d="M21.800 24l2 2 3.400-4" stroke="#fff" stroke-width="1.350"/></svg>
<div class="abs" style="left:1396.200px;top:99px;width:42.200px;height:44.500px;border:3.700px solid #fb0412;border-radius:10.500px;"></div>
<div class="abs" style="left:0;top:843.800px;width:436.400px;height:2px;background:#c9c9c9;"></div>
<div class="abs" style="left:0;top:845.300px;width:1440px;height:30.700px;background:linear-gradient(180deg,#b6b6b6 0,#b6b6b6 1.200px,#e8e8e8 2.400px,#dddddd 8px,#cfcfcf 17px,#bababa 30.700px);"></div>
<div class="t" style="left:2px;top:856px;font-size:11px;line-height:12px;color:#1c1c1c;letter-spacing:.37px">1 elemento selezionato (Image 'immagine_1')</div>
<div class="t" style="left:458px;top:856px;font-size:11px;line-height:12px;color:#1c1c1c;letter-spacing:.36px">Da (12.33, 1.00) a (18.60, 3.26) - (6.27, 2.26) cm</div>
<div class="t" style="left:1277px;top:856px;font-size:11px;line-height:12px;color:#1c1c1c;letter-spacing:.3px">Zoom:</div>
<div class="abs" style="left:1316.500px;top:851.500px;width:75px;height:19.500px;background:#fff;border-radius:5px;box-shadow:0 0 0 0.500px #c9c9c9,0 1px 1.500px rgba(0,0,0,.25);"></div>
<div class="t" style="left:1319px;top:854px;font-size:12px;line-height:14px;color:#1c1c1c;letter-spacing:.3px">85.0%</div>
<div class="abs" style="left:1374px;top:853.500px;width:16px;height:15.500px;background:#1a7bfd;border-radius:4px;"></div>
<svg class="abs" style="left:1374px;top:853.5px;" width="16" height="16" viewBox="0 0 16 16" fill="none" stroke-linecap="round" stroke-linejoin="round"><path d="M4.800 6.500l3.200 3.200 3.200-3.200" stroke="#fff" stroke-width="1.600"/></svg>
<svg class="abs" style="left:1400px;top:852px;" width="18" height="18" viewBox="0 0 18 18" fill="none" stroke-linecap="round" stroke-linejoin="round"><rect x="4.500" y="1.500" width="12" height="12" rx="2" fill="#c9d6e4" stroke="#1b6ea5" stroke-width="1.200"/><rect x="1.500" y="10.500" width="6" height="6" rx="1.200" fill="#d4dde8" stroke="#1b6ea5" stroke-width="1.200"/><path d="M8.500 9.500l5-5M9.800 4.500h3.700v3.700" stroke="#1b6ea5" stroke-width="1.200"/></svg>
<svg class="abs" style="left:1420px;top:852px;" width="18" height="18" viewBox="0 0 18 18" fill="none" stroke-linecap="round" stroke-linejoin="round"><rect x="4.500" y="1.500" width="12" height="12" rx="2" fill="#c9d6e4" stroke="#1b6ea5" stroke-width="1.200"/><rect x="1.500" y="10.500" width="6" height="6" rx="1.200" fill="#d4dde8" stroke="#1b6ea5" stroke-width="1.200"/><path d="M13.500 4.500l-5 5M8.500 5.800v3.700h3.700" stroke="#1b6ea5" stroke-width="1.200"/></svg>
</div></body></html>
